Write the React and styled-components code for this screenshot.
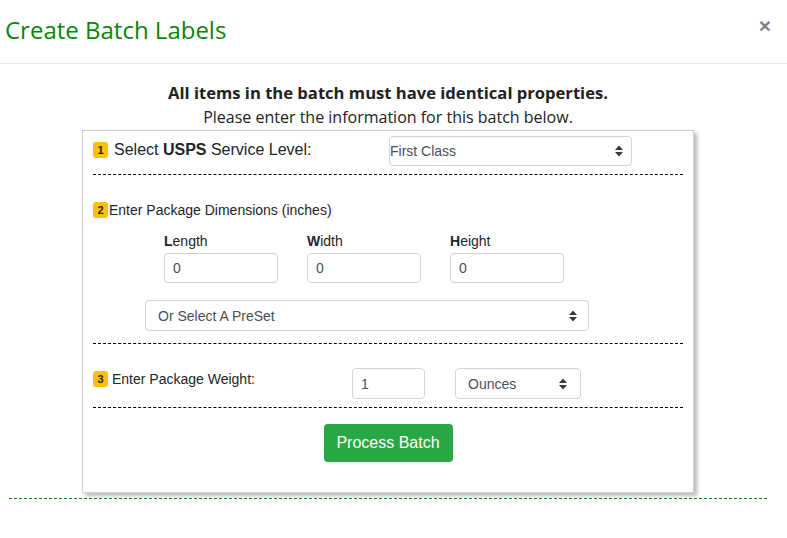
import React from "react";
import styled, { createGlobalStyle } from "styled-components";

const Global = createGlobalStyle`
  html, body { margin: 0; padding: 0; background: #fff; }
  body { font-family: "Open Sans", "Liberation Sans", sans-serif; color: #212529; }
  * { box-sizing: border-box; }
`;

const Header = styled.header`
  height: 64px;
  border-bottom: 1px solid #e5e5e5;
  display: flex;
  align-items: center;
  justify-content: space-between;
  padding: 0 16px 5px 5px;
`;

const Title = styled.h4`
  margin: 0;
  font-family: "Open Sans", sans-serif;
  font-weight: 400;
  font-size: 24px;
  color: #0a840a;
  letter-spacing: 0;
`;

const Close = styled.button`
  border: 0;
  background: none;
  padding: 0;
  margin-top: -8px;
  font-family: "Liberation Sans", Arial, sans-serif;
  font-size: 21px;
  font-weight: 700;
  line-height: 1;
  color: #808080;
  cursor: pointer;
`;

const Body = styled.main`
  padding: 17px 20px 0 9px;
`;

const Intro = styled.p`
  margin: 0;
  text-align: center;
  font-size: ${(p) => (p.$bold ? 16.6 : 16)}px;
  line-height: 24px;
  color: #222;
  font-weight: ${(p) => (p.$bold ? 700 : 400)};
`;

const Panel = styled.section`
  width: 612px;
  margin: 1px auto 0;
  border: 1px solid #cfcfcf;
  box-shadow: 3px 3px 4px rgba(0, 0, 0, 0.28);
  padding: 5px 10px 30px 10px;
  font-family: "Liberation Sans", Arial, sans-serif;
  font-size: 14px;
  color: #212529;
`;

const Row = styled.div`
  display: flex;
  align-items: flex-start;
  padding-top: ${(p) => p.$top || 0}px;
`;

const StepLabel = styled.div`
  width: ${(p) => p.$width || 296}px;
  display: flex;
  align-items: center;
  gap: ${(p) => p.$gap ?? 4}px;
  font-size: ${(p) => p.$size || 14}px;
  padding-top: ${(p) => p.$pt || 0}px;
  color: #212529;
`;

const Badge = styled.span`
  display: inline-flex;
  align-items: center;
  justify-content: center;
  width: 15px;
  height: 16px;
  border-radius: 3px;
  background: #ffc107;
  color: #212529;
  font-size: 11px;
  font-weight: 700;
  flex-shrink: 0;
`;

const Divider = styled.hr`
  margin: ${(p) => p.$mt || 8}px 0 0;
  border: 0;
  border-top: 1px dashed #000;
  height: 0;
`;

const SelectWrap = styled.div`
  position: relative;
  width: ${(p) => p.$w}px;
  margin-left: ${(p) => p.$ml || 0}px;
`;

const Select = styled.select`
  appearance: none;
  -webkit-appearance: none;
  width: 100%;
  height: ${(p) => p.$h || 30}px;
  border: 1px solid #ced4da;
  border-radius: 4px;
  background: #fff;
  padding: 0 24px 0 ${(p) => p.$pl ?? 12}px;
  font-family: "Liberation Sans", Arial, sans-serif;
  font-size: 14px;
  color: #495057;
`;

const Caret = styled.svg`
  position: absolute;
  right: ${(p) => p.$r || 17}px;
  top: 50%;
  transform: translateY(-50%);
  pointer-events: none;
`;

const Arrows = ({ right }) => (
  <Caret $r={right} width="8" height="11" viewBox="0 0 8 11">
    <path d="M4 0 L8 4.5 L0 4.5 Z M0 6.5 L8 6.5 L4 11 Z" fill="#343a40" />
  </Caret>
);

const DimGrid = styled.div`
  display: grid;
  grid-template-columns: repeat(3, 114px);
  column-gap: 29px;
  margin: 15px 0 0 71px;
`;

const Field = styled.label`
  display: flex;
  flex-direction: column;
  gap: 4px;
  font-size: 14px;
  color: #212529;
  b { font-weight: 700; }
`;

const Input = styled.input`
  width: ${(p) => (p.$w ? `${p.$w}px` : "100%")};
  height: ${(p) => p.$h || 30}px;
  border: 1px solid #ced4da;
  border-radius: 4px;
  padding: 0 8px;
  font-family: "Liberation Sans", Arial, sans-serif;
  font-size: 14px;
  color: #495057;
  margin-left: ${(p) => p.$ml || 0}px;
`;

const Actions = styled.div`
  display: flex;
  justify-content: center;
  padding-top: 16px;
`;

const Button = styled.button`
  width: 129px;
  height: 38px;
  border: 0;
  border-radius: 4px;
  background: #28a745;
  color: #fff;
  font-family: "Liberation Sans", Arial, sans-serif;
  font-size: 16px;
  cursor: pointer;
`;

const Footer = styled.div`
  margin-top: 5px;
  height: 1px;
  border-top: 1px dashed #0a8a0a;
`;

export default function App() {
  return (
    <>
      <Global />
      <Header>
        <Title>Create Batch Labels</Title>
        <Close aria-label="Close">×</Close>
      </Header>
      <Body>
        <Intro $bold>All items in the batch must have identical properties.</Intro>
        <Intro>Please enter the information for this batch below.</Intro>
        <Panel>
          <Row>
            <StepLabel $size={16} $gap={6} $pt={5}>
              <Badge>1</Badge>
              <span>
                Select <b>USPS</b> Service Level:
              </span>
            </StepLabel>
            <SelectWrap $w={243}>
              <Select $pl={0} defaultValue="first">
                <option value="first">First Class</option>
              </Select>
              <Arrows right={9} />
            </SelectWrap>
          </Row>
          <Divider $mt={8} />

          <Row $top={27}>
            <StepLabel $width={400} $gap={1}>
              <Badge>2</Badge>
              <span>Enter Package Dimensions (inches)</span>
            </StepLabel>
          </Row>
          <DimGrid>
            <Field>
              <span>
                <b>L</b>ength
              </span>
              <Input defaultValue="0" />
            </Field>
            <Field>
              <span>
                <b>W</b>idth
              </span>
              <Input defaultValue="0" />
            </Field>
            <Field>
              <span>
                <b>H</b>eight
              </span>
              <Input defaultValue="0" />
            </Field>
          </DimGrid>
          <Row $top={17}>
            <SelectWrap $w={444} $ml={52}>
              <Select $h={31} defaultValue="">
                <option value="">Or Select A PreSet</option>
              </Select>
              <Arrows right={12} />
            </SelectWrap>
          </Row>
          <Divider $mt={12} />

          <Row $top={24}>
            <StepLabel $width={259} $gap={4} $pt={3}>
              <Badge>3</Badge>
              <span>Enter Package Weight:</span>
            </StepLabel>
            <Input $w={73} $h={31} defaultValue="1" />
            <SelectWrap $w={126} $ml={30}>
              <Select $h={31} defaultValue="oz">
                <option value="oz">Ounces</option>
              </Select>
              <Arrows right={14} />
            </SelectWrap>
          </Row>
          <Divider $mt={8} />

          <Actions>
            <Button>Process Batch</Button>
          </Actions>
        </Panel>
        <Footer />
      </Body>
    </>
  );
}
